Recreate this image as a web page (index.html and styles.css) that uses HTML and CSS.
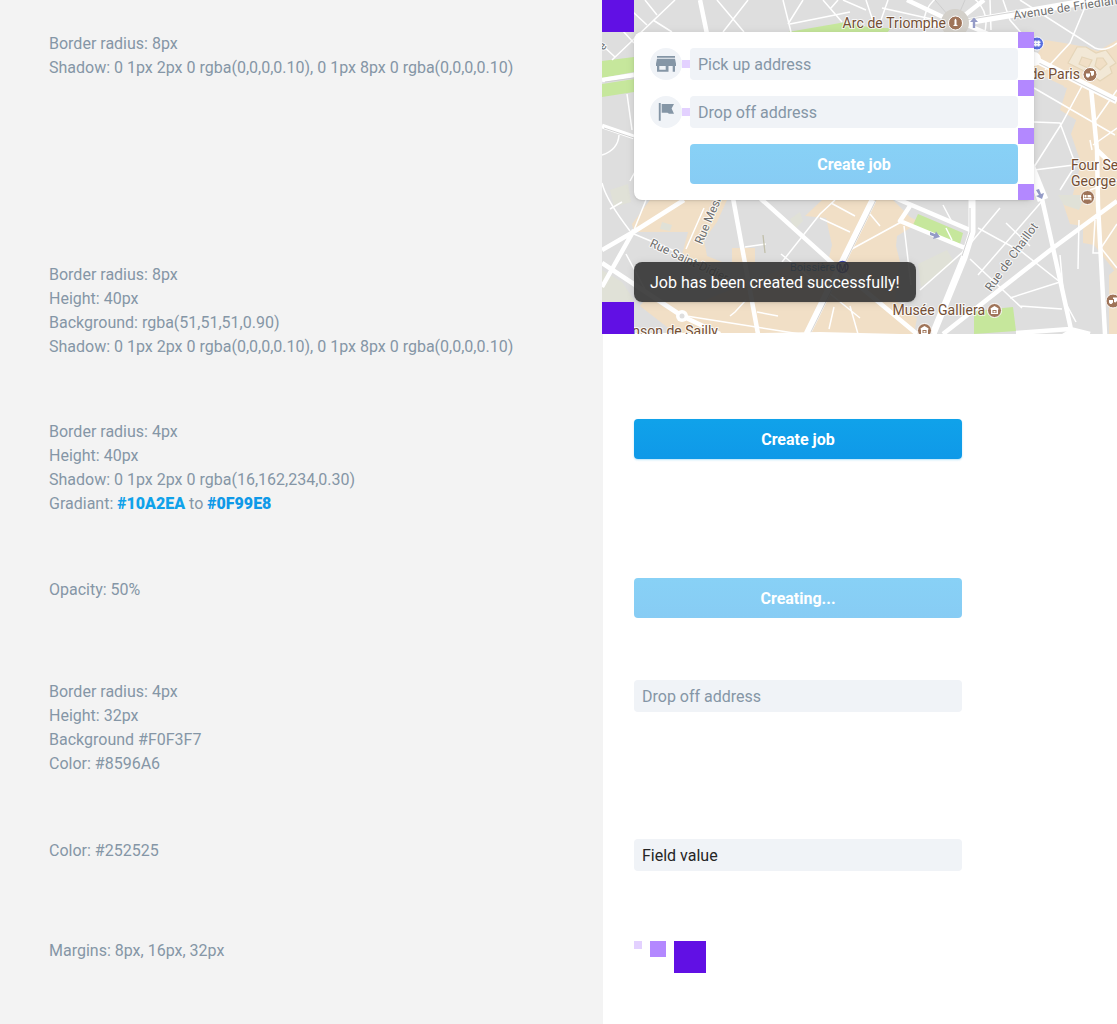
FILE: index.html
```html
<!DOCTYPE html>
<html lang="en">
<head>
<meta charset="utf-8">
<title>Create job – UI specs</title>
<link rel="stylesheet" href="styles.css">
</head>
<body>
<div class="page">
  <aside class="notes">
    <p class="note note-card">Border radius: 8px<br>Shadow: 0 1px 2px 0 rgba(0,0,0,0.10), 0 1px 8px 0 rgba(0,0,0,0.10)</p>
    <p class="note note-toast">Border radius: 8px<br>Height: 40px<br>Background: rgba(51,51,51,0.90)<br>Shadow: 0 1px 2px 0 rgba(0,0,0,0.10), 0 1px 8px 0 rgba(0,0,0,0.10)</p>
    <p class="note note-button">Border radius: 4px<br>Height: 40px<br>Shadow: 0 1px 2px 0 rgba(16,162,234,0.30)<br>Gradiant: <b class="from">#10A2EA</b> to <b class="to">#0F99E8</b></p>
    <p class="note note-loading">Opacity: 50%</p>
    <p class="note note-field">Border radius: 4px<br>Height: 32px<br>Background #F0F3F7<br>Color: #8596A6</p>
    <p class="note note-value">Color: #252525</p>
    <p class="note">Margins: 8px, 16px, 32px</p>
  </aside>
  <main class="samples">
    <section class="map">
      <svg class="map-art" viewBox="602 0 515 334" width="515" height="334">
        <rect class="land" x="602" y="0" width="515" height="334"/>
        <g class="district">
          <path d="M650 200H727L717 222 704 240 707 256 722 262H680L688 232H634L632 224Z"/>
          <path d="M732 248H755V264H732ZM805 216 822 200H893L910 217 920 222 897 236 896 246 900 262 895 300 917 318 914 334H758L676 334 640 306 645 300 700 302 800 262 828 262 832 245 826 218Z"/>
          <path d="M1040 50 1045 40 1064 43 1080 46 1098 51 1117 40V274L1094 245 1083 243 1083 226 1070 224 1064 206 1060 195 1080 163 1070 135 1076 120 1060 110 1067 88 1034 80V60Z"/>
          <path d="M1109 275 1117 268V334H1109Z"/>
        </g>
        <path class="land" d="M1034 72 1064 86 1058 110 1076 120 1071 134 1081 163 1072 198H1034ZM780 262 805 240 830 262Z"/>
        <path class="quiet" d="M610 190 628 184 631 202 614 207ZM602 270 622 282 634 300 602 302ZM662 222 672 225 670 231 660 229ZM790 219 800 212 803 221 795 229ZM918 264 947 250 954 262 921 287ZM1058 195H1085L1079 210 1064 205Z"/>
        <g class="park">
          <path d="M602 61 634 57V72L602 78ZM602 84 634 79V92L602 97ZM788 32 846 22 872 28 891 28 886 34ZM918 214 963 233 960 244 913 225ZM974 311 1013 307 1016 331 974 334Z"/>
        </g>
        <path class="building" fill-rule="evenodd" d="M1077 47 1086 47 1096 53 1106 50 1116 63 1110 67 1112 73 1100 81 1090 74 1068 63ZM1082 57 1092 60 1088 68 1079 64ZM1097 58 1103 58 1107 64 1100 70 1095 66Z"/>
        <g class="lane">
          <path d="M612 60 675 0M633 12 647 25M645 0 657 15M653 20 672 32M602 45 615 57M622 30 634 43M627 94 632 130M717 0 744 32M748 0 723 32M783 0 791 32M803 0 788 24M823 0 842 22M790 24 850 12M843 0 866 10M838 0 831 8M866 0 874 24M888 0 881 20M882 8 936 20M602 155Q618 150 619 135M630 181 636 170"/>
          <path d="M602 183Q606 200 630 231M634 230 646 200M634 234 684 255M626 254 648 295M622 202 610 209M686 249 704 208M745 247 766 244M781 254 860 318M782 262 820 214 835 200M820 218 850 232M831 203 855 216M850 250 903 221 M870 214 880 226M904 226 911 285M730 316 735 312 746 300M757 312 778 316M834 307 829 329M850 306 858 334M680 315 800 334"/>
          <path d="M920 290 965 250 1000 208M978 228 1022 252 1060 282M970 259 1022 308M1006 223 1030 246M1043 200 978 275M1010 298 1060 282M1020 306 1062 309M1117 224 1101 248 1117 268M1079 220 1078 269M943 205 952 222M946 228 952 240"/>
          <path d="M1003 0 1010 20 1036 50M990 0 991 30M1020 0 1095 48Q1106 52 1117 43M1088 0 1070 43 1045 70M1034 88 1115 135M1034 167 1062 123 1082 86M1034 122 1060 123 1075 163M1034 170 1090 163M1117 90 1096 120M1060 190 1075 166M1093 145 1117 128M1117 180 1090 190M1090 140 1092 150"/>
          <circle cx="955" cy="23" r="31"/><path d="M1060 255 1064 300 1076 322M1095 220 1093 253 1101 253M1102 275V300"/>
        </g>
        <g class="street">
          <path d="M700 0 707 34M602 80 634 75M602 126 634 137M602 250 635 231 684 200M602 287 634 230M602 263 682 316 720 334M733 198 758 334M760 198 840 270 917 334M910 206 900 221 965 248M888 195 970 230M907 0 945 18M984 0 965 15M965 24 1034 54M943 334 1053 248 1117 201M1040 190 1053 248 1072 334M1091 88 1097 150 1098 205 1105 334M1097 150 1117 169M1016 333 1070 329 1090 334M920 26 945 23"/>
          <path class="wide-street" d="M1026 158 1043 200"/>
        </g>
        <g class="avenue"><path d="M873 200 807 334M972 198V232L964 258 933 334M967 22 1020 13 1117-4M1034 59 1117 101"/></g>
        <path class="rail" d="M876 200 810 334M970 208V232L962 256M965 20 1020 11M1037 62 1115 101M605 82 634 78M604 128 634 138M965 0 955 23 935 0"/>
        <circle class="street-node" cx="682" cy="316" r="6"/><circle class="land" cx="682" cy="316" r="2.500"/>
        <circle class="place-star" cx="955" cy="23" r="14"/>
        <circle class="street-node" cx="1034" cy="59" r="7"/>
        <path class="path-mark" d="M763 235 765 253"/>
        <path class="arrow" d="M974 17.500 978 22H975.200V28H972.800V22H970ZM930 232 935 234 936 231.500 940 237 933 239 934 236.500 930 235ZM1036 190 1039 189 1041 194 1044 193 1042 199 1036 196 1039 195ZM887 197 893 196V200Z"/>
        <path class="white-edge" d="M602 334V333H760L820 332 900 334ZM1062 334 1070 329 1088 334Z"/>
        <g class="road-name">
          <text transform="translate(1014 19.500) rotate(-8.500)" textLength="112">Avenue de Friedland</text>
          <text transform="translate(702 245) rotate(-67)">Rue Mesnil</text>
          <text transform="translate(649 246) rotate(25)" textLength="85">Rue Saint-Didier</text>
          <text transform="translate(991 292) rotate(-54)" textLength="81">Rue de Chaillot</text>
          <text transform="translate(603 51) rotate(-48)">é</text>
        </g>
        <text class="metro" x="790" y="271" textLength="45">Boissière</text>
        <circle class="metro-ring" cx="842.5" cy="267" r="5.5"/><text class="metro-m" x="838.5" y="270.5">M</text>
        <g class="place">
          <text x="842.5" y="28" textLength="103.500">Arc de Triomphe</text>
          <text x="1080" y="79" text-anchor="end">Salle de Paris</text>
          <text x="1071" y="170">Four Seasons</text>
          <text x="1071" y="186">George V</text>
          <text x="892.500" y="315" textLength="92.500">Musée Galliera</text>
          <text x="718" y="336" text-anchor="end">Lycée Janson de Sailly</text>
        </g>
        <g class="pin">
          <g transform="translate(955.500 23)"><circle r="7"/><path d="M0-4.500 1-3V1.500L2.500 3H-2.500L-1 1.500V-3Z"/></g>
          <g transform="translate(1090 74.500)"><circle r="7"/><path d="M-4-1H0V1.500L-1.500 3H-3L-4 1.500ZM0-3.500H4V0L2.500 1.500 1 1V-2H0Z"/></g>
          <g transform="translate(1087.500 197.500)"><circle r="7"/><path d="M-4.500-3H-3.500V.5H4V3H3V2H-3.500V3H-4.500ZM-3-2.500H-1V0H-3ZM0-2.500H3Q4-2 4 0H0Z"/></g>
          <g transform="translate(994.500 310.500)"><circle r="7"/><path fill-rule="evenodd" d="M0-4.500 4-2V-1H3.500V3.500H-3.500V-1H-4V-2ZM-2-.5V2.500H2V-.5ZM-1 .5H1V2H-1Z"/></g>
          <g transform="translate(924.500 330.500)"><circle r="7"/><path fill-rule="evenodd" d="M0-4.500 4-2V-1H3.500V3.500H-3.500V-1H-4V-2ZM-2-.5V2.500H2V-.5ZM-1 .5H1V2H-1Z"/></g>
          <g transform="translate(1113 301)"><circle r="7"/><path d="M-4-1H0V1.500L-1.500 3H-3L-4 1.500ZM0-3.500H4V0L2.500 1.500 1 1V-2H0Z"/></g>
          <g class="transit" transform="translate(1037 43.500)"><circle r="6.500"/><path d="M-2.500-3H-.5V3H-2.500ZM.5-3H2.500V3H.5ZM-3.500-2H3.500V-.5H-3.500ZM-3.500 .5H3.500V2H-3.500Z"/></g>
        </g>
      </svg>
      <i class="margin-lg map-top"></i>
      <form class="card">
        <div class="row">
          <span class="badge"><svg viewBox="0 0 20 20" width="20" height="20"><path d="M1 2h18v1.700H1zM1 4.800h18l1 5V12h-1v5.700h-2.300V12h-4.200v5.700H1V12H0V9.800zM3.300 12v3.700h6.400V12z" fill-rule="evenodd"/></svg></span>
          <i class="margin-sm"></i>
          <div class="field">Pick up address</div>
        </div>
        <div class="row">
          <span class="badge"><svg viewBox="0 0 20 20" width="20" height="20"><path d="M2.800 1h1.900v17.800H2.800zM5.700 2H18l-2.400 4.500L18 11.700h-5l-1.500-1H5.700z"/></svg></span>
          <i class="margin-sm"></i>
          <div class="field">Drop off address</div>
        </div>
        <div class="button is-loading card-button">Create job</div>
        <div class="card-margins"><i class="margin-md"></i><i class="margin-md"></i><i class="margin-md"></i><i class="margin-md"></i></div>
      </form>
      <div class="toast">Job has been created successfully!</div>
      <i class="margin-lg map-bottom"></i>
    </section>
    <div class="examples">
      <div class="button sample-button">Create job</div>
      <div class="button is-loading sample-loading">Creating...</div>
      <div class="field sample-field">Drop off address</div>
      <div class="field has-value sample-value">Field value</div>
      <div class="margins"><i class="margin-sm"></i><i class="margin-md"></i><i class="margin-lg"></i></div>
    </div>
  </main>
</div>
</body>
</html>
```
FILE: styles.css
```css
* { box-sizing: border-box; }
body { margin: 0; background: #fff; font: 16px/24px Roboto, sans-serif; color: #8596a6; }
.page { display: grid; grid-template-columns: 603px 514px; width: 1117px; height: 1024px; overflow: hidden; }

.notes { background: #f3f3f3; padding: 32px 49px; }
.note { margin: 0; white-space: nowrap; }
.note-card { margin-bottom: 183px; }
.note-toast { margin-bottom: 61px; }
.note-button { margin-bottom: 62px; }
.note-loading { margin-bottom: 78px; }
.note-field { margin-bottom: 63px; }
.note-value { margin-bottom: 76px; }
.note b { font-weight: 900; }
.from { color: #10a2ea; }
.to { color: #0f99e8; }

.map { position: relative; width: 515px; height: 334px; margin-left: -1px; overflow: hidden; }
.map-art { display: block; }
.land { fill: #dedede; }
.district { fill: #f1dfc6; }
.quiet { fill: #e0e1d7; }
.park { fill: #c6e79c; }
.building { fill: #f2e8d6; stroke: #e5d5b8; stroke-width: 1.2; }
.lane, .street, .avenue { fill: none; stroke: #fff; stroke-width: 1.5; }
.street { stroke-width: 4.5; stroke-linejoin: round; }
.wide-street { stroke-width: 11; }
.avenue { stroke-width: 7; stroke-linejoin: round; }
.street-node { fill: #fff; }
.rail { fill: none; stroke: #c9c9c9; stroke-width: .8; }
.place-star { fill: #d3d0ca; }
.path-mark { stroke: #c1bfaa; stroke-width: 1.3; }
.arrow { fill: #949bc7; }
.white-edge { fill: #fff; }
.road-name { font-size: 12px; fill: #6e6e6e; }
.road-name text, .place text { paint-order: stroke; stroke: #fff; stroke-opacity: .8; stroke-width: 2px; stroke-linejoin: round; }
.place { font-size: 14px; fill: #744f35; }
.metro { font-size: 11px; fill: #1673c4; }
.metro-ring { fill: #fff; stroke: #3c45a5; stroke-width: 1.5; }
.metro-m { font-size: 9px; font-weight: 700; fill: #3c45a5; }
.pin circle { fill: #9f7459; stroke: #fff; stroke-width: 1; }
.pin path { fill: #fff; }
.pin .transit circle { fill: #596fdf; }

.card { position: absolute; left: 32px; top: 32px; width: 400px; height: 168px; padding: 16px; display: flex; flex-direction: column; gap: 16px; background: #fff; border-radius: 8px; box-shadow: 0 1px 2px rgba(0,0,0,.1), 0 1px 8px rgba(0,0,0,.1); }
.row { display: flex; align-items: center; }
.badge { display: flex; align-items: center; justify-content: center; width: 32px; height: 32px; border-radius: 50%; background: #f0f3f7; fill: #8596a6; }
.field { width: 328px; height: 32px; padding: 5px 8px 3px; border-radius: 4px; background: #f0f3f7; color: #8596a6; }
.has-value { color: #252525; }
.button { width: 328px; height: 40px; padding-top: 1px; line-height: 40px; border-radius: 4px; background: linear-gradient(#10a2ea, #0f99e8); box-shadow: 0 1px 2px rgba(16,162,234,.3); color: #fff; font-weight: 700; text-align: center; }
.is-loading { background: linear-gradient(#88d1f6, #87ccf4); box-shadow: none; }
.card-button { align-self: flex-end; }
.card-margins { position: absolute; right: 0; top: 0; height: 168px; display: grid; grid-template-rows: 48px 48px 56px 16px; }
.toast { position: absolute; left: 32px; top: 262px; height: 40px; padding: 0 16px; line-height: 41px; white-space: nowrap; color: #fff; background: rgba(51,51,51,.9); border-radius: 8px; box-shadow: 0 1px 2px rgba(0,0,0,.1), 0 1px 8px rgba(0,0,0,.1); }

.margin-sm, .margin-md, .margin-lg { display: block; }
.margin-sm { width: 8px; height: 8px; background: #e3d1ff; }
.margin-md { width: 16px; height: 16px; background: #b388ff; }
.margin-lg { width: 32px; height: 32px; background: #6110e4; }
.map-top, .map-bottom { position: absolute; left: 0; }
.map-top { top: 0; }
.map-bottom { bottom: 0; }

.examples { padding: 85px 31px 0; }
.sample-button { margin-bottom: 119px; }
.sample-loading { margin-bottom: 62px; }
.sample-field { margin-bottom: 127px; }
.sample-value { margin-bottom: 70px; }
.margins { display: flex; gap: 8px; }
```
